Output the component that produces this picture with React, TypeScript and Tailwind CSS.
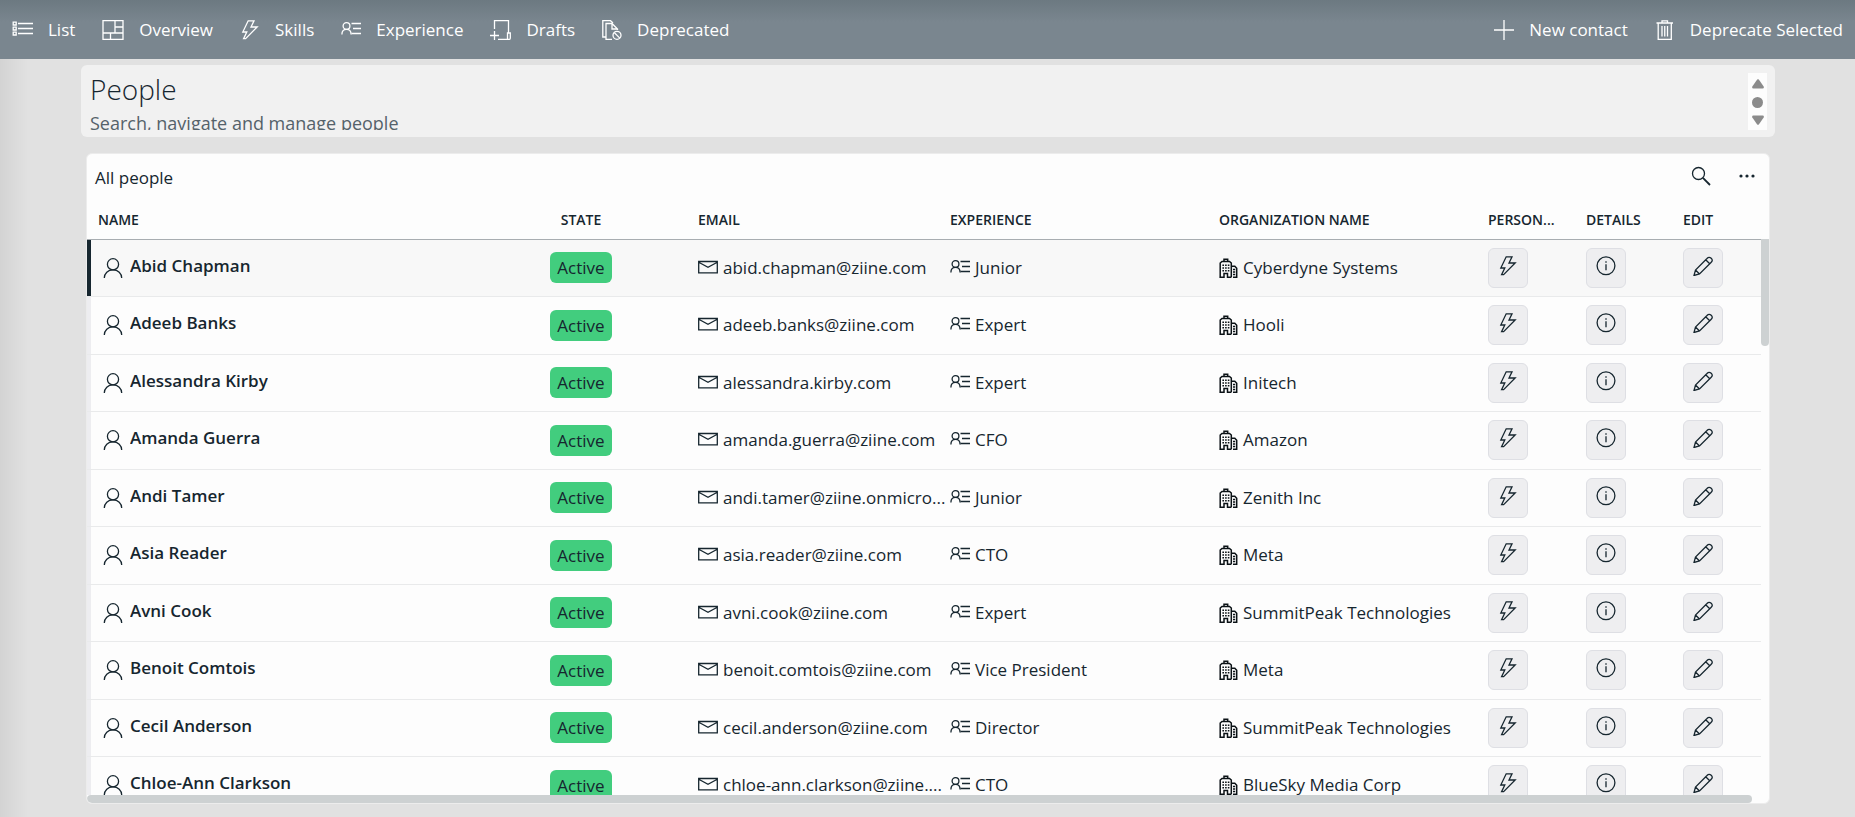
import type { ReactNode } from 'react';

type Person = { name: string; email: string; role: string; org: string };

const PEOPLE: Person[] = [
  { name: 'Abid Chapman', email: 'abid.chapman@ziine.com', role: 'Junior', org: 'Cyberdyne Systems' },
  { name: 'Adeeb Banks', email: 'adeeb.banks@ziine.com', role: 'Expert', org: 'Hooli' },
  { name: 'Alessandra Kirby', email: 'alessandra.kirby.com', role: 'Expert', org: 'Initech' },
  { name: 'Amanda Guerra', email: 'amanda.guerra@ziine.com', role: 'CFO', org: 'Amazon' },
  { name: 'Andi Tamer', email: 'andi.tamer@ziine.onmicro...', role: 'Junior', org: 'Zenith Inc' },
  { name: 'Asia Reader', email: 'asia.reader@ziine.com', role: 'CTO', org: 'Meta' },
  { name: 'Avni Cook', email: 'avni.cook@ziine.com', role: 'Expert', org: 'SummitPeak Technologies' },
  { name: 'Benoit Comtois', email: 'benoit.comtois@ziine.com', role: 'Vice President', org: 'Meta' },
  { name: 'Cecil Anderson', email: 'cecil.anderson@ziine.com', role: 'Director', org: 'SummitPeak Technologies' },
  { name: 'Chloe-Ann Clarkson', email: 'chloe-ann.clarkson@ziine....', role: 'CTO', org: 'BlueSky Media Corp' },
];

export default function App() {
  return (
    <div className="flex h-screen flex-col overflow-hidden bg-[#e1e1e1] bg-[linear-gradient(to_right,#d3d3d3,#e1e1e1_28px)] font-['Open_Sans',sans-serif] text-[#16262f]">
      <CommandBar />
      <PageTitle />
      <PeopleCard />
    </div>
  );
}

function CommandBar() {
  return (
    <header className="flex h-[59px] shrink-0 items-center justify-between bg-[linear-gradient(to_bottom,#6c7981,#7a868f_22px)] px-3 text-[17px] text-white">
      <nav className="flex items-center gap-[27px]">
        <Command label="List" icon={<ListIcon />} />
        <Command label="Overview" icon={<OverviewIcon />} />
        <Command label="Skills" icon={<BoltIcon />} />
        <Command label="Experience" icon={<ContactListIcon />} />
        <Command label="Drafts" icon={<DraftIcon />} />
        <Command label="Deprecated" icon={<DeprecatedIcon />} />
      </nav>
      <div className="flex items-center gap-[27px]">
        <Command label="New contact" icon={<PlusIcon />} />
        <Command label="Deprecate Selected" icon={<TrashIcon />} />
      </div>
    </header>
  );
}

function Command({ label, icon }: { label: string; icon: ReactNode }) {
  return (
    <button type="button" className="flex items-center gap-[15px] whitespace-nowrap">
      {icon}
      {label}
    </button>
  );
}

function PageTitle() {
  return (
    <section className="mt-[6px] mr-[80px] ml-[81px] flex h-[72px] shrink-0 justify-between rounded-md bg-[#f1f1f1] pt-2 pr-2 pb-[7px] pl-[9px]">
      <div className="overflow-hidden">
        <h1 className="text-[28px] leading-8 font-light">People</h1>
        <p className="text-[18px] leading-9 text-[#55626a]">Search, navigate and manage people</p>
      </div>
      <div className="flex w-[19px] shrink-0 flex-col items-center justify-between bg-[#fdfdfd] pt-[6px] pb-[5px] text-[#8b8b8b]">
        <svg width="12" height="10" viewBox="0 0 12 10" fill="currentColor">
          <path d="M5.2.6Q6-.3 6.8.6L11.7 7.6Q12.3 9.6 10.6 9.6H1.4Q-.3 9.6.3 7.6Z" />
        </svg>
        <span className="size-[11px] rounded-full bg-current" />
        <svg width="12" height="10" viewBox="0 0 12 10" fill="currentColor">
          <path d="M5.2 9.4Q6 10.3 6.8 9.4L11.7 2.4Q12.3.4 10.6.4H1.4Q-.3.4.3 2.4Z" />
        </svg>
      </div>
    </section>
  );
}

function PeopleCard() {
  return (
    <section className="relative mt-4 mr-[85px] mb-[13px] ml-[86px] flex min-h-0 flex-1 flex-col overflow-hidden rounded-md border border-[#ececec] bg-[#fdfdfd]">
      <div className="flex h-[47px] shrink-0 items-center justify-between pr-[13px] pl-2">
        <h2 className="text-[17px]">All people</h2>
        <div className="flex items-center gap-[27px] pb-1">
          <button type="button" aria-label="Search">
            <SearchIcon />
          </button>
          <button type="button" aria-label="More options">
            <MoreIcon />
          </button>
        </div>
      </div>
      <div className="min-h-0 flex-1 overflow-hidden border-b-8 border-transparent pr-2">
        <table className="w-full table-fixed border-collapse">
          <colgroup>
            <col className="w-1" />
            <col />
            <col className="w-[220px]" />
            <col className="w-[252px]" />
            <col className="w-[269px]" />
            <col className="w-[269px]" />
            <col className="w-[98px]" />
            <col className="w-[97px]" />
            <col className="w-[85px]" />
          </colgroup>
          <thead>
            <tr className="h-[38px] border-b border-[#a8adb1] text-left text-[14px]">
              <th />
              <Head label="NAME" />
              <Head label="STATE" className="text-center" />
              <Head label="EMAIL" />
              <Head label="EXPERIENCE" />
              <Head label="ORGANIZATION NAME" />
              <Head label="PERSON..." />
              <Head label="DETAILS" />
              <Head label="EDIT" />
            </tr>
          </thead>
          <tbody>
            {PEOPLE.map((p, i) => (
              <PersonRow key={p.name} person={p} selected={i === 0} />
            ))}
          </tbody>
        </table>
      </div>
      {/* scroll thumbs */}
      <div className="absolute top-[85px] right-0 h-[107px] w-2 rounded-b-full bg-[#cdd1d2]" />
      <div className="absolute right-[17px] bottom-0 left-0 h-2 rounded-full bg-[#cdd1d2]" />
    </section>
  );
}

function Head({ label, className = '' }: { label: string; className?: string }) {
  return <th className={`px-[7px] font-semibold whitespace-nowrap ${className}`}>{label}</th>;
}

function PersonRow({ person, selected }: { person: Person; selected: boolean }) {
  return (
    <tr
      className={`h-[57px] border-b border-[#e9eaeb] text-[17px] even:h-[58px] ${selected ? 'bg-[#f8f8f8]' : ''}`}
    >
      <td className={selected ? 'bg-[#16262f]' : 'bg-[#ededf0]'} />
      <td className="pl-3">
        <div className="flex items-center gap-[7px]">
          <PersonIcon />
          <span className="truncate pb-1 font-semibold">{person.name}</span>
        </div>
      </td>
      <td className="text-center">
        <span className="inline-block h-[31px] rounded-md bg-[#42cd7e] px-[7px] leading-[31px]">Active</span>
      </td>
      <Cell icon={<MailIcon />} text={person.email} />
      <Cell icon={<ContactListIcon />} text={person.role} />
      <Cell icon={<BuildingIcon />} text={person.org} />
      <Action label={`Skills of ${person.name}`} icon={<BoltIcon />} />
      <Action label={`Details of ${person.name}`} icon={<InfoIcon />} />
      <Action label={`Edit ${person.name}`} icon={<PencilIcon />} />
    </tr>
  );
}

function Cell({ icon, text }: { icon: ReactNode; text: string }) {
  return (
    <td className="pl-[7px]">
      <div className="flex items-center gap-[5px] whitespace-nowrap">
        {icon}
        <span>{text}</span>
      </div>
    </td>
  );
}

function Action({ label, icon }: { label: string; icon: ReactNode }) {
  return (
    <td className="px-[7px]">
      <button
        type="button"
        aria-label={label}
        className="flex size-10 items-center justify-center rounded-md border border-[#dedfe4] bg-[#eeeef0] pb-1"
      >
        {icon}
      </button>
    </td>
  );
}

/* ---- icons ---- */

function Icon({ w = 20, h = 20, children }: { w?: number; h?: number; children: ReactNode }) {
  return (
    <svg
      width={w}
      height={h}
      viewBox={`0 0 ${w} ${h}`}
      fill="none"
      stroke="currentColor"
      strokeWidth="1.3"
      className="shrink-0"
      aria-hidden="true"
    >
      {children}
    </svg>
  );
}

function ListIcon() {
  return (
    <Icon w={21}>
      <path d="M6 3.5H21M6 8.5H21M6 13.5H21" />
      <path d="M1.2 2.2H4.2V5H1.2ZM1.2 7.2H4.2V10H1.2ZM1.2 12.2H4.2V15H1.2Z" />
    </Icon>
  );
}

function OverviewIcon() {
  return (
    <Icon w={22}>
      <path d="M1 .7H21V19.3H1ZM13 .7V13M1 13H21M13 7H21M8.5 13V19.3" />
    </Icon>
  );
}

function BoltIcon() {
  return (
    <Icon>
      <path d="M8.2.8H14L11 7H17.2L5.6 18.6H3.6L6.8 12H2.8Z" />
    </Icon>
  );
}

function ContactListIcon() {
  return (
    <Icon>
      <path d="M10.5 3.5H20M12 8.5H20M10.5 13.5H20" />
      <circle cx="5.5" cy="6" r="3.4" />
      <path d="M.9 14.5C.9 11.5 2.8 9.4 5.5 9.4S10.1 11.5 10.1 14.5" />
    </Icon>
  );
}

function DraftIcon() {
  return (
    <Icon w={21}>
      <path d="M4.5 9V.7H18.5V13M8 19.3H19.3Q20.3 19.3 20.3 18V13H17.5V19M4.5 11V20M0 15.5H9" />
    </Icon>
  );
}

function DeprecatedIcon() {
  return (
    <Icon>
      <path d="M4 17H.8V.7H8.5L11 3" />
      <path d="M10 19.3H4V3.5H10L15.5 9V10M10 3.5V9H15.5" />
      <circle cx="15" cy="15.3" r="4" />
      <path d="M12.2 12.5L17.8 18.1" />
    </Icon>
  );
}

function PlusIcon() {
  return (
    <Icon>
      <path d="M10 0V20M0 10H20" />
    </Icon>
  );
}

function TrashIcon() {
  return (
    <Icon>
      <path d="M1.5 3H18M7 3V.8H12.5V3M3.2 3V19.3H16.3V3M7 6V16.5M9.75 6V16.5M12.5 6V16.5" />
    </Icon>
  );
}

function SearchIcon() {
  return (
    <Icon>
      <circle cx="7.5" cy="7.5" r="6" />
      <path d="M11.9 11.9L19 19" strokeWidth="1.8" />
    </Icon>
  );
}

function MoreIcon() {
  return (
    <Icon w={18}>
      <g fill="currentColor" stroke="none">
        <circle cx="3" cy="10" r="1.6" />
        <circle cx="9" cy="10" r="1.6" />
        <circle cx="15" cy="10" r="1.6" />
      </g>
    </Icon>
  );
}

function PersonIcon() {
  return (
    <Icon>
      <circle cx="10" cy="6.3" r="5.6" />
      <path d="M1.3 20C1.3 15.3 5 11.9 10 11.9S18.7 15.3 18.7 20" />
    </Icon>
  );
}

function MailIcon() {
  return (
    <Icon>
      <path d="M.7 3.5H19.3V14.8H.7ZM.7 4.3L10 9.3L19.3 4.3" />
    </Icon>
  );
}

function BuildingIcon() {
  return (
    <Icon w={19}>
      <g stroke="#0b1216" strokeWidth="1.5">
        <path d="M1.2 19.2V5L3 3.4H10.5L12.3 5V19.2M5 3.4V1.2H8.7V3.4M.4 19.2H5V15.5H8.5V19.2H12.3M12.3 8.2H15.8L17.7 10.2V19.2H14" />
        <path d="M3.4 7.2H10.4M3.4 10H10.4M3.4 12.8H10.4" strokeWidth="1.6" strokeDasharray="1.6 1.1" />
        <path d="M14 11.5H16.2M14 14H16.2M14 16.5H16.2" strokeWidth="1.3" />
      </g>
    </Icon>
  );
}

function InfoIcon() {
  return (
    <Icon>
      <circle cx="10" cy="9.8" r="8.9" />
      <path d="M10 8.2V14.2M10 5.2V6.7" />
    </Icon>
  );
}

function PencilIcon() {
  return (
    <Icon>
      <path d="M1 19.5L2.5 14L14 2.5Q16 .3 18.2 2.3T18 6.5L6.5 18ZM2.5 14L6.5 18M12.7 3.8L16.7 7.8" />
    </Icon>
  );
}
